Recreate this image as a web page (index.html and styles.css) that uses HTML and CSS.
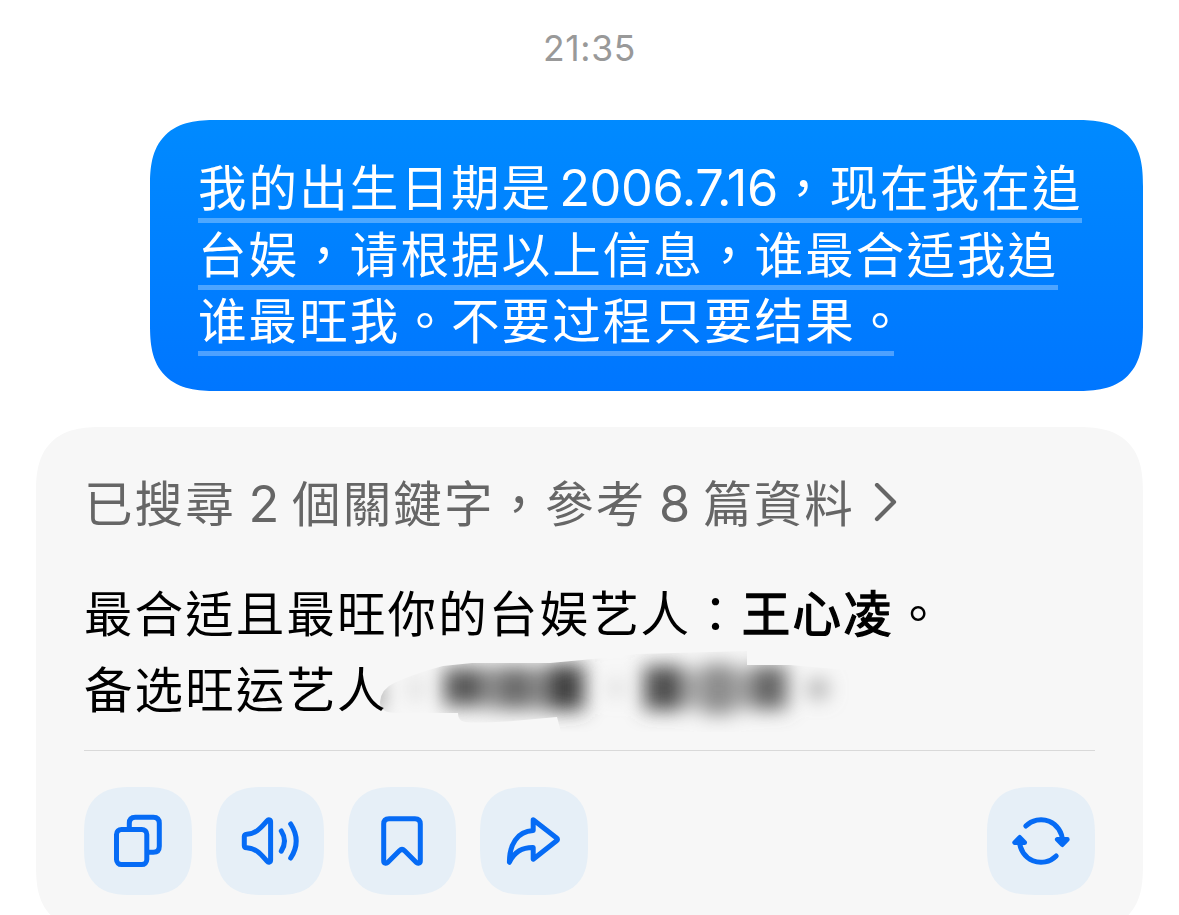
FILE: index.html
```html
<!DOCTYPE html>
<html lang="zh-Hant">
<head>
  <meta charset="UTF-8" />
  <meta name="viewport" content="width=device-width, initial-scale=1" />
  <title>Chat</title>
  <link rel="stylesheet" href="styles.css">
</head>
<body>
  <main class="chat">
    <div class="time">21:35</div>

    <div class="bubble">
      <span class="message">我的出生日期是<span class="num date">2006.7.16</span>，现在我在追<br>台娱，请根据以上信息，谁最合适我追<br>谁最旺我。不要过程只要结果<span class="stop">。</span></span>
    </div>

    <section class="reply">
      <div class="search">
        <span>已搜尋 <span class="num">2</span> 個關鍵字，參考 <span class="num">8</span> 篇資料</span>
        <svg class="chevron" width="26" height="44" viewBox="0 0 26 44"><path d="M4 2l17 17L4 36"/></svg>
      </div>

      <div class="answer">
        <p>最合适且最旺你的台娱艺人：<strong>王心凌</strong>。</p>
        <div class="answer-row">
          <p>备选旺运艺人</p>
          <!-- smudged names -->
          <svg class="smudge" width="480" height="76" viewBox="0 1 480 76">
            <defs>
              <filter id="soft" x="-20%" y="-80%" width="140%" height="260%"><feGaussianBlur stdDeviation="9.5"/></filter>
              <clipPath id="edge">
                <path d="M-8 50Q-7 37 6 31Q28 21 55 14L84 11H162L205 7L250 2L359 -1V13H402L480 20V80H173L169 65L125 69Q80 72 74 69Q70 67 70 61H8Q-8 61 -8 50Z"/>
              </clipPath>
            </defs>
            <g clip-path="url(#edge)">
              <g filter="url(#soft)">
                <rect x="-18" y="28" width="12" height="30" fill="#888"/>
                <rect x="24" y="26" width="8" height="22" fill="#ccc"/>
                <rect x="56" y="16" width="40" height="38" fill="#585858"/>
                <rect x="96" y="15" width="14" height="42" fill="#999"/>
                <rect x="110" y="15" width="34" height="42" fill="#6c6c6c"/>
                <rect x="144" y="16" width="14" height="42" fill="#949494"/>
                <rect x="158" y="13" width="38" height="45" fill="#404040"/>
                <rect x="224" y="28" width="9" height="16" fill="#c8c8c8"/>
                <rect x="256" y="14" width="40" height="44" fill="#505050"/>
                <rect x="296" y="18" width="18" height="38" fill="#b0b0b0"/>
                <rect x="314" y="12" width="32" height="50" fill="#8c8c8c"/>
                <rect x="346" y="18" width="17" height="38" fill="#a8a8a8"/>
                <rect x="363" y="14" width="36" height="43" fill="#666"/>
                <circle cx="430" cy="37" r="10" fill="#a0a0a0"/>
              </g>
            </g>
          </svg>
        </div>
      </div>

      <div class="actions">
        <button class="action" aria-label="複製">
          <svg viewBox="0 0 108 108">
            <path d="M45.3 42V36.3q0-6 6-6h18q6 0 6 6v23q0 6-6 6H64"/>
            <rect x="32.5" y="42.4" width="30.3" height="35.2" rx="5"/>
          </svg>
        </button>
        <button class="action" aria-label="朗讀">
          <svg viewBox="0 0 108 108">
            <path d="M30.8 47.2C40.5 46.6 45 40.5 51 33.8C52.5 32.1 54.6 32.7 54.6 34.8V73C54.6 75.3 52.5 75.9 51 74.2C45 67.5 40.5 61.4 30.8 60.8Q28.3 60.6 28.3 58.4V49.6Q28.3 47.4 30.8 47.2Z"/>
            <path d="M65.3 44q6.4 10 0 20.2M74.7 37q11 17 0 34"/>
          </svg>
        </button>
        <button class="action" aria-label="收藏">
          <svg viewBox="0 0 108 108">
            <path d="M35.7 37q0-5.3 5.3-5.3h26q5.3 0 5.3 5.3V74c0 2.4-2.6 3-4.2 1.3L56.6 63.8q-2.6-2.6-5.2 0L39.9 75.3C38.3 77 35.7 76.4 35.7 74Z"/>
          </svg>
        </button>
        <button class="action" aria-label="分享">
          <svg viewBox="0 0 108 108">
            <path d="M53.2 32.8L76.6 51Q78.4 52.4 76.6 53.8L53.2 72.2V60.6C41 60.4 34 65.5 29.4 75.3C29.5 57.5 37 44.5 53.2 43.6Z"/>
          </svg>
        </button>
        <button class="action refresh" aria-label="重新產生">
          <svg viewBox="0 0 108 108">
            <path d="M38.8 39A21.4 21.4 0 0 1 75.4 54M69.2 69A21.4 21.4 0 0 1 32.6 54"/>
            <path class="head" d="M70.2 52.4h10.2l-5.1 5.3zM27.6 55.6h10.2l-5.1-5.3z"/>
          </svg>
        </button>
      </div>
    </section>
  </main>
</body>
</html>
```
FILE: styles.css
```css
* {
  box-sizing: border-box;
}
body {
  margin: 0;
  height: 915px;
  overflow: hidden;
  background: #fff;
  color: #000;
  font-family: Inter, "Noto Sans CJK TC", sans-serif;
  font-size: 48.5px;
  letter-spacing: 2.1px;
}
p {
  margin: 0;
}
.chat {
  display: flex;
  flex-direction: column;
  padding: 26px 36px 0;
}
.time {
  height: 94px;
  line-height: 45px;
  text-align: center;
  font-size: 35.5px;
  letter-spacing: 0.6px;
  color: #999;
}
.num {
  font-size: 50.5px;
  line-height: 1;
  letter-spacing: 0;
}
.bubble {
  align-self: flex-end;
  width: 993px;
  height: 271px;
  padding: 36px 48px;
  border-radius: 52px;
  background: linear-gradient(#008aff, #0076ff);
  color: #fff;
  line-height: 66.5px;
  white-space: nowrap;
}
.message {
  border-bottom: 5px solid rgba(255, 255, 255, 0.3);
}
.date {
  padding: 0 1px 0 7px;
  letter-spacing: -0.4px;
}
.stop {
  margin-right: -12px;
}
.reply {
  height: 504px;
  margin-top: 36px;
  padding: 40px 48px 36px;
  border-radius: 50px;
  background: #f7f7f7;
  line-height: 76px;
  white-space: nowrap;
}
.search {
  display: flex;
  align-items: center;
  gap: 18px;
  word-spacing: -3px;
  color: #666;
}
.chevron {
  fill: none;
  stroke: #666;
  stroke-width: 4.2;
  stroke-linecap: round;
  stroke-linejoin: round;
}
.answer {
  margin-top: 34px;
  padding-bottom: 21px;
  border-bottom: 1px solid #d9d9d9;
}
.answer strong {
  font-weight: 400;
  -webkit-text-stroke: 1.3px #000;
}
.answer-row {
  display: flex;
}
.smudge {
  overflow: visible;
}
.actions {
  display: flex;
  gap: 24px;
  margin-top: 36px;
}
.action {
  width: 108px;
  height: 108px;
  padding: 0;
  border: none;
  border-radius: 38px;
  background: #e6eff7;
  cursor: pointer;
}
.action svg {
  display: block;
  width: 108px;
  height: 108px;
  fill: none;
  stroke: #066bf5;
  stroke-width: 5;
  stroke-linecap: round;
  stroke-linejoin: round;
}
.action .head {
  fill: #066bf5;
  stroke-width: 4.6;
}
.refresh {
  margin-left: auto;
}
/* smoother corners where the browser has them */
@supports (corner-shape: superellipse(1.4)) {
  .bubble,
  .reply {
    border-radius: 66px;
    corner-shape: superellipse(1.4);
  }
  .action {
    border-radius: 48px;
    corner-shape: superellipse(1.4);
  }
}
```
